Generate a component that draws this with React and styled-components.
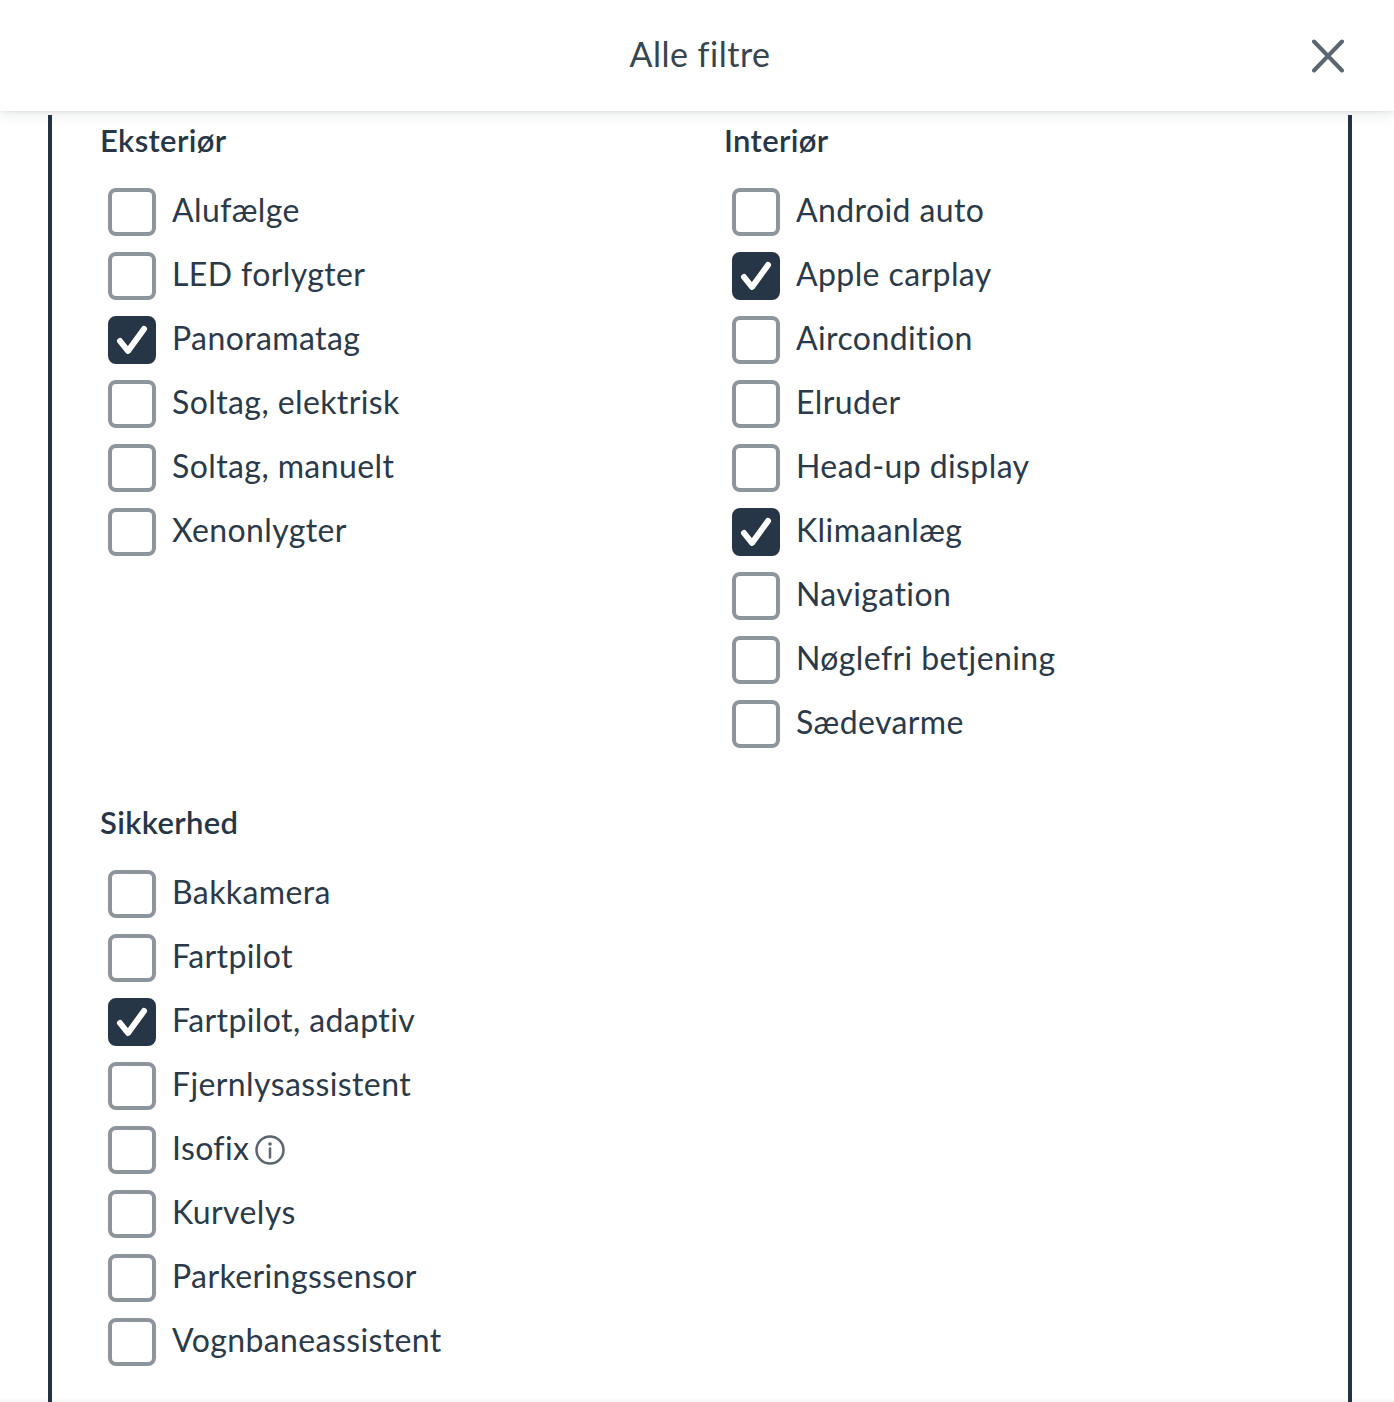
import styled, { createGlobalStyle } from 'styled-components';

const GlobalStyle = createGlobalStyle`
  html, body {
    margin: 0;
    background: #fff;
  }
  body {
    font-family: 'Lato', 'Noto Sans', sans-serif;
    color: #263646;
  }
`;

const Page = styled.div`
  height: 1402px;
  overflow: hidden;
  display: flex;
  flex-direction: column;
  box-shadow: inset 0 -4px 5px -4px rgba(30, 45, 60, 0.1);
`;

const Header = styled.header`
  position: relative;
  z-index: 1;
  flex: none;
  height: 111px;
  padding: 0 0 4px 6px;
  box-sizing: border-box;
  display: flex;
  align-items: center;
  justify-content: center;
  background: #fff;
  box-shadow: 0 1px 3px rgba(30, 45, 60, 0.08), 0 3px 14px rgba(30, 45, 60, 0.1);
`;

const Title = styled.h1`
  margin: 0;
  font-size: 34px;
  font-weight: 400;
  letter-spacing: 0.5px;
  color: #36454f;
`;

const CloseButton = styled.button`
  position: absolute;
  top: 39px;
  right: 49px;
  width: 34px;
  height: 34px;
  padding: 0;
  border: 0;
  background: none;
  color: #5b6670;
  svg {
    display: block;
  }
`;

const Frame = styled.main`
  flex: 1;
  margin: 4px 42px 0 48px;
  padding-left: 48px;
  border-left: 4px solid #233343;
  border-right: 4px solid #233343;
  display: grid;
  grid-template-columns: 624px 1fr;
  align-content: start;
`;

const Section = styled.section`
  display: flex;
  flex-direction: column;
  min-height: ${p => p.$minHeight || 0}px;
`;

const Heading = styled.h2`
  margin: 2px 0 0;
  height: 46px;
  font-size: 31px;
  line-height: 46px;
  font-weight: 600;
  letter-spacing: 0.35px;
  color: #263646;
`;

const List = styled.ul`
  list-style: none;
  margin: 25px 0 0;
  padding: 0 0 0 8px;
  display: flex;
  flex-direction: column;
  gap: 16px;
`;

const Row = styled.li`
  display: flex;
  align-items: center;
  gap: 16px;
  height: 48px;
`;

const Box = styled.span`
  flex: none;
  box-sizing: border-box;
  width: 48px;
  height: 48px;
  border-radius: 8px;
  border: 4px solid ${p => (p.$checked ? '#263646' : '#8e949b')};
  background: ${p => (p.$checked ? '#263646' : '#fff')};
  display: flex;
  align-items: center;
  justify-content: center;
`;

const Label = styled.span`
  margin-top: -6px;
  font-size: 32px;
  letter-spacing: 0.4px;
  color: #2b3a49;
  white-space: nowrap;
`;

const InfoIcon = styled.svg`
  margin-left: -10px;
  flex: none;
`;

const Check = () => (
  <svg width="34" height="30" viewBox="0 0 34 30" fill="none">
    <path d="M5 16l8 10L29 4" stroke="#fff" strokeWidth="6" strokeLinecap="round" strokeLinejoin="round" />
  </svg>
);

const groups = [
  {
    title: 'Eksteriør',
    minHeight: 682,
    items: [['Alufælge'], ['LED forlygter'], ['Panoramatag', true], ['Soltag, elektrisk'], ['Soltag, manuelt'], ['Xenonlygter']],
  },
  {
    title: 'Interiør',
    minHeight: 682,
    items: [['Android auto'], ['Apple carplay', true], ['Aircondition'], ['Elruder'], ['Head-up display'], ['Klimaanlæg', true], ['Navigation'], ['Nøglefri betjening'], ['Sædevarme']],
  },
  {
    title: 'Sikkerhed',
    items: [['Bakkamera'], ['Fartpilot'], ['Fartpilot, adaptiv', true], ['Fjernlysassistent'], ['Isofix', false, true], ['Kurvelys'], ['Parkeringssensor'], ['Vognbaneassistent']],
  },
];

export default function App() {
  return (
    <>
      <GlobalStyle />
      <Page>
        <Header>
          <Title>Alle filtre</Title>
          <CloseButton aria-label="Luk">
            <svg width="34" height="34" viewBox="0 0 34 34" fill="none">
              <path d="M3 2.5l28 29M31 2.5L3 31.5" stroke="currentColor" strokeWidth="4" strokeLinecap="round" />
            </svg>
          </CloseButton>
        </Header>
        <Frame>
          {groups.map(group => (
            <Section key={group.title} $minHeight={group.minHeight}>
              <Heading>{group.title}</Heading>
              <List>
                {group.items.map(([name, checked, info]) => (
                  <Row key={name}>
                    <Box $checked={checked}>{checked && <Check />}</Box>
                    <Label>{name}</Label>
                    {info && (
                      <InfoIcon width="30" height="30" viewBox="0 0 30 30" fill="none">
                        <circle cx="15" cy="15" r="13.5" stroke="#5b6670" strokeWidth="2.5" />
                        <circle cx="15" cy="9" r="1.8" fill="#5b6670" />
                        <path d="M15 13.5v9" stroke="#5b6670" strokeWidth="2.5" strokeLinecap="round" />
                      </InfoIcon>
                    )}
                  </Row>
                ))}
              </List>
            </Section>
          ))}
        </Frame>
      </Page>
    </>
  );
}
